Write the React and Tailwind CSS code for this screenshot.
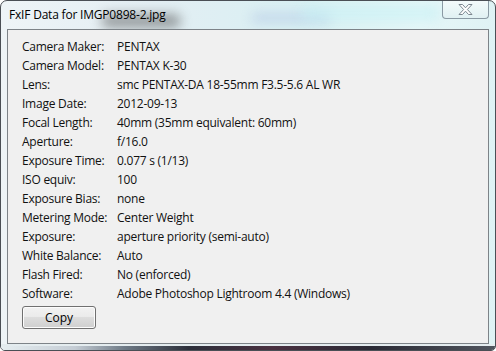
import React from "react";

const rows = [
  ["Camera Maker:", "PENTAX"],
  ["Camera Model:", "PENTAX K-30"],
  ["Lens:", "smc PENTAX-DA 18-55mm F3.5-5.6 AL WR"],
  ["Image Date:", "2012-09-13"],
  ["Focal Length:", "40mm (35mm equivalent: 60mm)"],
  ["Aperture:", "f/16.0"],
  ["Exposure Time:", "0.077 s (1/13)"],
  ["ISO equiv:", "100"],
  ["Exposure Bias:", "none"],
  ["Metering Mode:", "Center Weight"],
  ["Exposure:", "aperture priority (semi-auto)"],
  ["White Balance:", "Auto"],
  ["Flash Fired:", "No (enforced)"],
  ["Software:", "Adobe Photoshop Lightroom 4.4 (Windows)"],
];

export default function App() {
  return (
    <div className="w-[496px] h-[351px] overflow-hidden bg-white">
      <div
        className="w-[496px] h-[351px] flex flex-col rounded-t-[7px] rounded-b-[5px] border border-[#4a4f55] bg-[linear-gradient(90deg,#eef4f7_0%,#e3eef3_30%,#d9f0f3_60%,#e6f7f8_85%,#dff2f4_100%)] text-[12px] text-[#111] relative overflow-hidden"
        style={{ fontFamily: '"Open Sans", "Noto Sans", "DejaVu Sans", sans-serif' }}
      >
        <div className="absolute left-[100px] top-[13px] w-[80px] h-[14px] rounded-full bg-[#4a4a4a] opacity-50 blur-[6px]" />
        <div className="absolute left-[250px] top-[12px] w-[80px] h-[10px] rounded-full bg-[#8fa3d8] opacity-30 blur-[6px]" />
        <div className="absolute left-[300px] top-[4px] w-[140px] h-[16px] rounded-full bg-[#c6f0f4] opacity-60 blur-[6px]" />
        <div className="h-[28px] flex items-start justify-between pl-[8px] relative">
          <span className="mt-[5px] text-[12px] leading-[18px] text-black tracking-[-0.2px]">FxIF Data for IMGP0898-2.jpg</span>
          <div className="mr-[6px] w-[47px] h-[19px] -mt-px rounded-b-[4px] border border-[#8a9aa4] border-t-0 bg-[linear-gradient(180deg,#f4fbfc,#e0f1f3)] flex items-center justify-center">
            <svg width="17" height="13" viewBox="0 0 17 13">
              <path
                d="M2 1.5h3.5L8.5 4.8 11.5 1.5H15L10.4 6.5 15 11.5h-3.5L8.5 8.2 5.5 11.5H2L6.6 6.5Z"
                fill="#ffffff"
                stroke="#7b8790"
                strokeWidth="1"
                strokeLinejoin="round"
              />
            </svg>
          </div>
        </div>
        <div className="mx-[6px] h-[315px] border border-[#7d8388] bg-[#f0f0f0] pt-[7px] pl-[14px] relative">
          {rows.map(([k, v]) => (
            <div key={k} className="flex h-[19px] items-center leading-[19px]">
              <span className="w-[95px] shrink-0 tracking-[-0.25px]">{k}</span>
              <span className="tracking-[-0.25px]">{v}</span>
            </div>
          ))}
          <button className="mt-[3px] w-[74px] h-[23px] rounded-[3px] border border-[#707070] bg-[linear-gradient(180deg,#f2f2f2_0%,#ebebeb_45%,#dddddd_50%,#cfcfcf_100%)] text-[12px] text-black shadow-[inset_0_0_0_1px_#fcfcfc]">
            Copy
          </button>
        </div>
        <div className="flex-1 border-t-2 border-[#e4ecef] bg-[linear-gradient(90deg,#e6eef1_0%,#c4ccd4_15%,#6e7a86_25%,#2c2f3a_38%,#4a3040_55%,#2a2a35_75%,#50555e_100%)]" />
      </div>
    </div>
  );
}
